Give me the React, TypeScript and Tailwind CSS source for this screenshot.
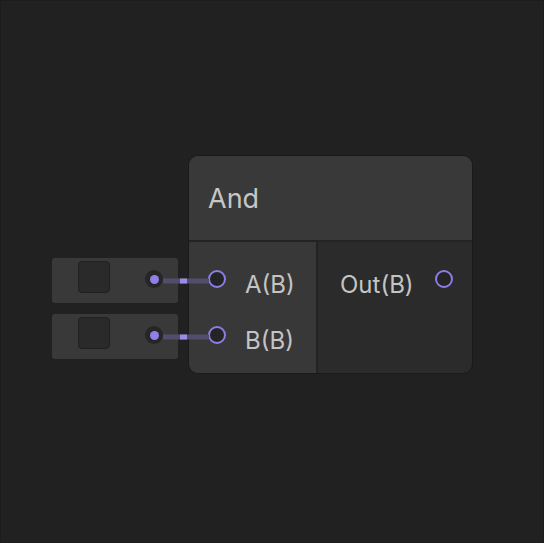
import React from "react";

const font = { fontFamily: 'Inter, "Noto Sans", sans-serif' };

function Port() {
  return (
    <div className="w-[18px] h-[18px] rounded-full border-2 border-[#8a7ee6] bg-[#242424] shrink-0" />
  );
}

function Stub() {
  return (
    <div className="w-[126px] h-[45px] bg-[#393939] rounded-[3px] flex items-start pt-[3px] pl-[26px]">
      <div className="w-[32px] h-[32px] rounded-[4px] bg-[#2a2a2a] border border-[#1f1f1f]" />
      <div className="ml-[35px] mt-[9px] w-[18px] h-[18px] rounded-full bg-[#262626] flex items-center justify-center">
        <div className="w-[9px] h-[9px] rounded-full bg-[#8f80e8]" />
      </div>
    </div>
  );
}

function Wire({ y }: { y: number }) {
  return (
    <svg className="absolute left-0 top-0 pointer-events-none" width={544} height={543}>
      <rect x={162} y={y - 2.5} width={46} height={5} fill="#534c6c" />
      <rect x={179} y={y - 2.5} width={7} height={5} fill="#9a8ce6" />
    </svg>
  );
}

export default function App() {
  return (
    <div className="relative w-[544px] h-[543px] bg-[#212121] border border-[#1c1c1c] overflow-hidden" style={font}>
      <div className="absolute left-[51px] top-[257px] flex flex-col gap-[11px]">
        <Stub />
        <Stub />
      </div>

      <div className="absolute left-[187px] top-[154px] w-[285px] h-[219px] rounded-[10px] border border-[#1a1a1a] bg-[#2b2b2b] overflow-hidden flex flex-col">
        <div className="h-[84px] bg-[#393939] flex items-center pl-[19px] pt-[2px] text-[27px] text-[#c6c6c6]">
          And
        </div>
        <div className="h-[2px] bg-[#232323]" />
        <div className="flex-1 flex">
          <div className="w-[127px] bg-[#383838] flex flex-col pt-[9px]">
            <div className="h-[56px] flex items-center pl-[19px] gap-[19px]">
              <Port />
              <span className="pt-[12px] text-[24px] text-[#c4c4c4]">A(B)</span>
            </div>
            <div className="h-[56px] flex items-center pl-[19px] gap-[19px]">
              <Port />
              <span className="pt-[12px] text-[24px] text-[#c4c4c4]">B(B)</span>
            </div>
          </div>
          <div className="w-[2px] bg-[#232323]" />
          <div className="flex-1 flex flex-col pt-[9px]">
            <div className="h-[56px] flex items-center justify-between pl-[22px] pr-[19px]">
              <span className="pt-[12px] text-[24px] text-[#c4c4c4]">Out(B)</span>
              <Port />
            </div>
          </div>
        </div>
      </div>

      <Wire y={280} />
      <Wire y={336} />
    </div>
  );
}
